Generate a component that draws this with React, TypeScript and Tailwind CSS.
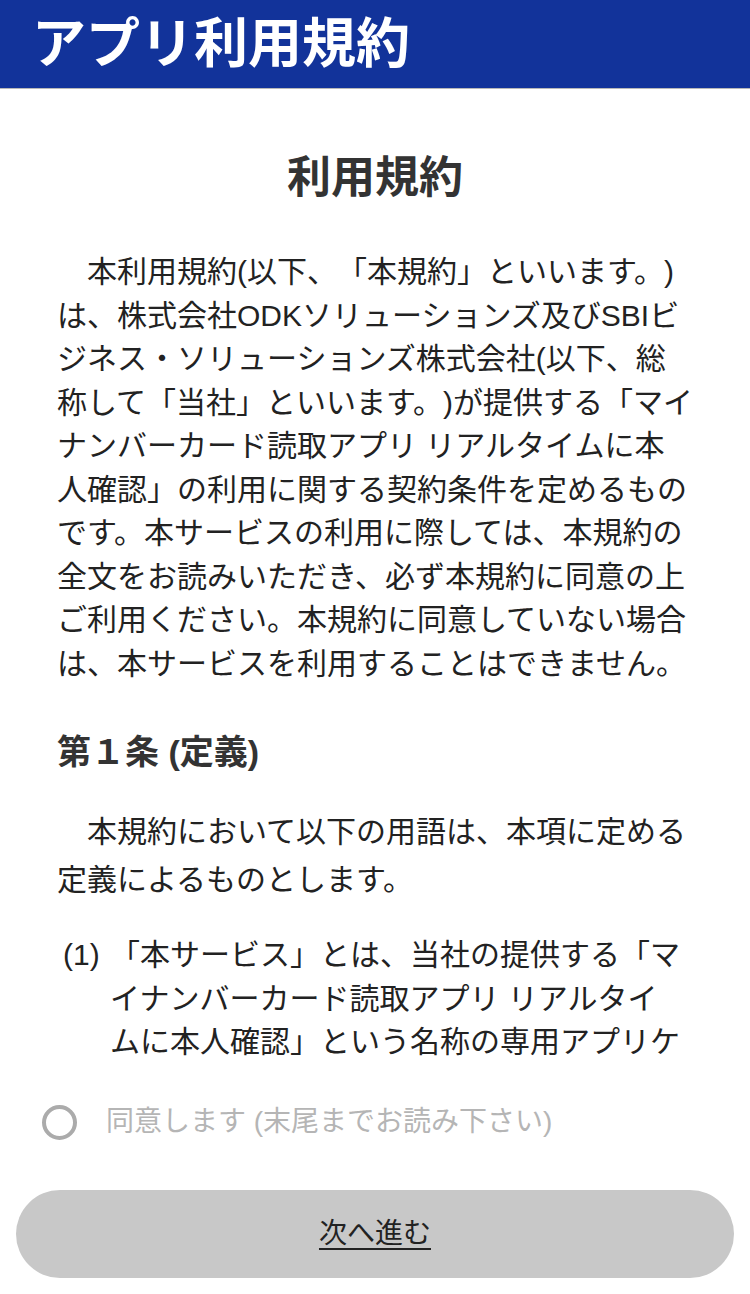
import React from 'react';

const font = { fontFamily: '"Liberation Sans", "Noto Sans CJK JP", sans-serif' };

const intro = [
  '本利用規約(以下、「本規約」といいます。)',
  'は、株式会社ODKソリューションズ及びSBIビ',
  'ジネス・ソリューションズ株式会社(以下、総',
  '称して「当社」といいます。)が提供する「マイ',
  'ナンバーカード読取アプリ リアルタイムに本',
  '人確認」の利用に関する契約条件を定めるもの',
  'です。本サービスの利用に際しては、本規約の',
  '全文をお読みいただき、必ず本規約に同意の上',
  'ご利用ください。本規約に同意していない場合',
  'は、本サービスを利用することはできません。',
];

const article1 = ['本規約において以下の用語は、本項に定める', '定義によるものとします。'];

const item1 = [
  '「本サービス」とは、当社の提供する「マ',
  'イナンバーカード読取アプリ リアルタイ',
  'ムに本人確認」という名称の専用アプリケ',
];

export default function App() {
  return (
    <div
      className="flex h-[1294px] w-[750px] flex-col overflow-hidden bg-white [text-spacing-trim:space-all]"
      style={font}
    >
      {/* header */}
      <header className="h-[89px] shrink-0 border-b border-[#b8b8b8] bg-[#12339a] pl-[32px]">
        <h1 className="text-[54px] font-bold leading-[88px] text-white">アプリ利用規約</h1>
      </header>

      {/* scrolling terms */}
      <main className="min-h-0 flex-1 overflow-hidden px-[57px]">
        <h2 className="mt-[59px] text-center text-[44px] font-bold leading-[60px] text-[#333333]">利用規約</h2>

        <div className="mt-[42px] text-[30px] leading-[43.5px] text-[#222222]">
          {intro.map((line, i) => (
            <div key={i} className={`whitespace-nowrap ${i === 0 ? 'pl-[30px]' : ''}`}>
              {line}
            </div>
          ))}
        </div>

        <h3 className="mt-[43px] text-[34px] font-bold leading-[48px] text-[#333333]">第１条 (定義)</h3>

        <div className="mt-[32px] text-[30px] leading-[48px] text-[#222222]">
          {article1.map((line, i) => (
            <div key={i} className={`whitespace-nowrap ${i === 0 ? 'pl-[30px]' : ''}`}>
              {line}
            </div>
          ))}
        </div>

        <div className="mt-[29px] flex text-[30px] leading-[43.5px] text-[#222222]">
          <span className="ml-[6px] w-[47px] shrink-0">(1)</span>
          <div>
            {item1.map((line, i) => (
              <div key={i} className="whitespace-nowrap">
                {line}
              </div>
            ))}
          </div>
        </div>
      </main>

      {/* footer */}
      <footer className="shrink-0 pb-[16px]">
        <label className="flex h-[84px] items-center pl-[42px]">
          <span className="h-[35px] w-[35px] shrink-0 rounded-full border-[4px] border-[#ababab]" />
          <span className="ml-[29px] text-[28px] text-[#b5b5b5]">同意します (末尾までお読み下さい)</span>
        </label>
        <button className="mx-[16px] mt-[26px] flex h-[88px] w-[718px] items-center justify-center rounded-full bg-[#c8c8c8]">
          <span className="text-[28px] text-[#222222] underline underline-offset-[5px]">次へ進む</span>
        </button>
      </footer>
    </div>
  );
}
